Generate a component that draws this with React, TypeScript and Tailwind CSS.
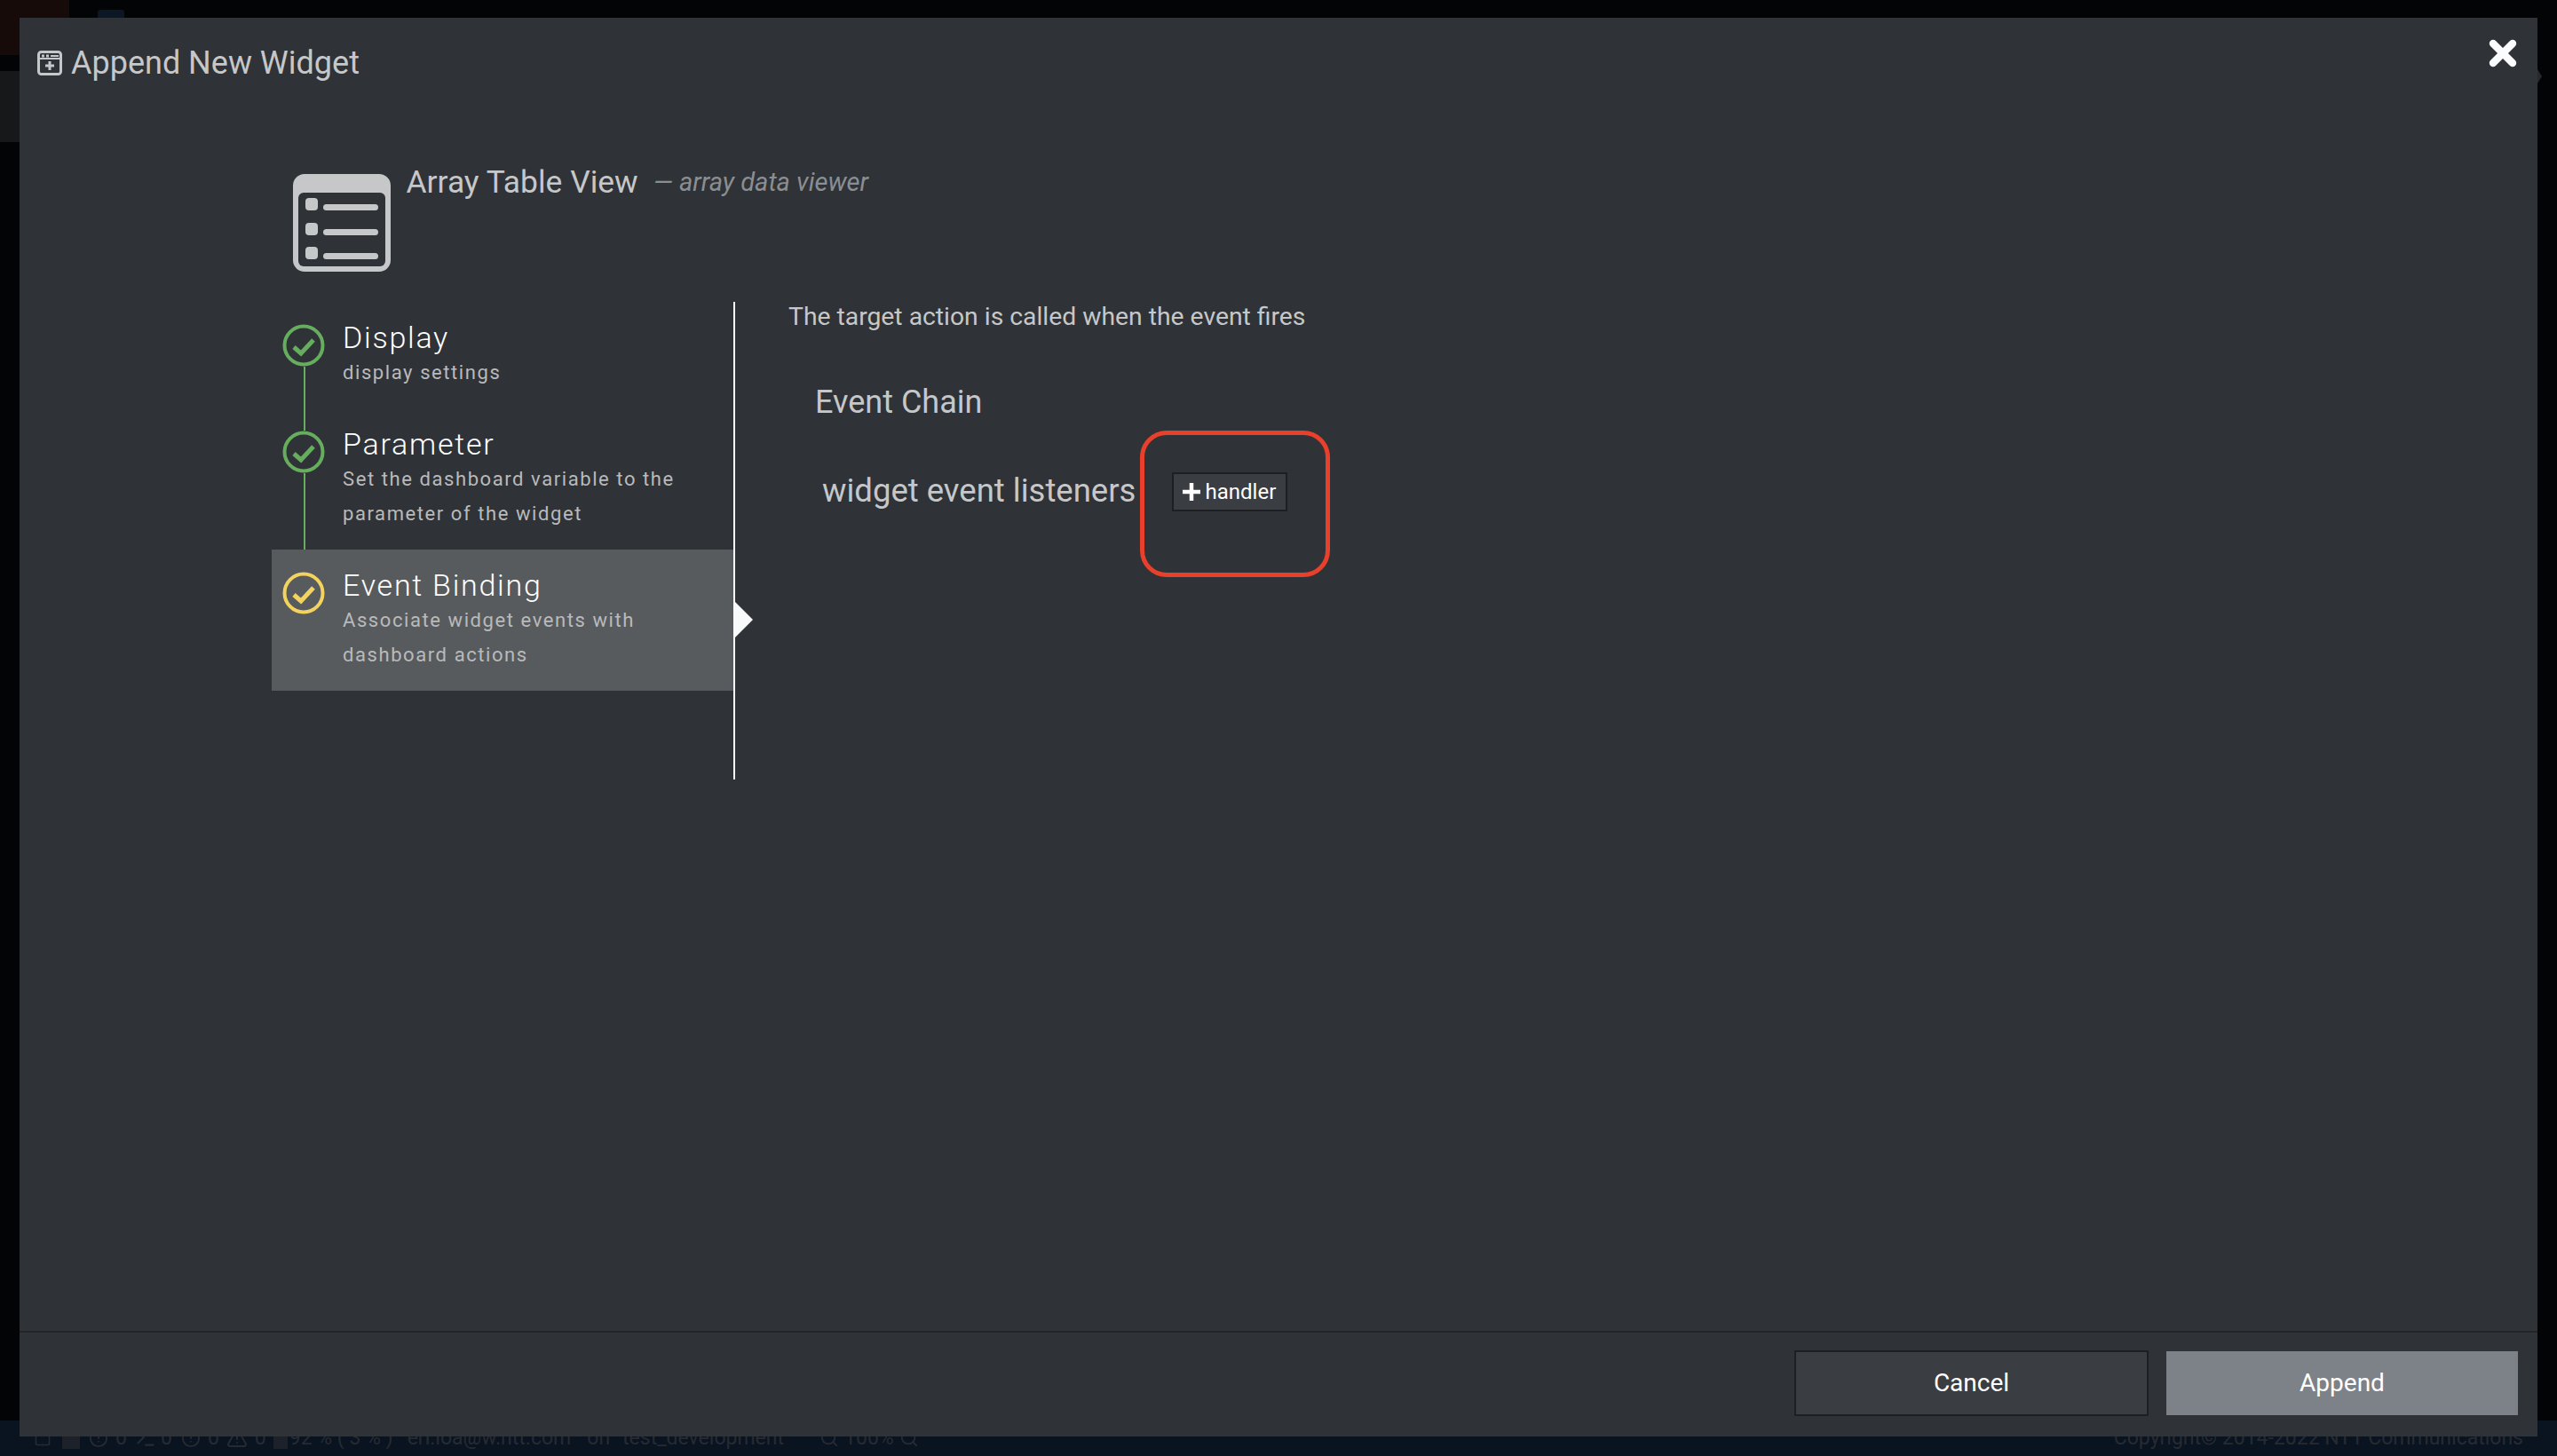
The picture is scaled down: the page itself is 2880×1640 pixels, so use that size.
import { CircleAlert, Search, Square, Terminal, TriangleAlert, X } from "lucide-react";

const steps = [
  { title: "Display", desc: ["display settings"], line: "h-[72px]", color: "#66ad5e" },
  { title: "Parameter", desc: ["Set the dashboard variable to the", "parameter of the widget"], line: "h-[111px]", color: "#66ad5e" },
  { title: "Event Binding", desc: ["Associate widget events with", "dashboard actions"], active: true, color: "#f3d35f" },
];

function StepCheck({ color }: { color: string }) {
  return (
    <svg width="48" height="48" viewBox="0 0 48 48" fill="none" className="relative mt-[5px] shrink-0">
      <circle cx="24" cy="24" r="21.5" stroke={color} strokeWidth="4" />
      <path d="M13 26l8 7 14-15" stroke={color} strokeWidth="5" />
    </svg>
  );
}

function TableIcon() {
  return (
    <svg width="110" height="110" viewBox="0 0 110 110" className="shrink-0 mt-[12px]">
      <rect width="110" height="110" rx="13" fill="#c6c7c8" />
      <rect x="6" y="21" width="98" height="83" rx="6" fill="#2f3237" />
      {[27, 55, 82].map((y) => (
        <g key={y} fill="#c6c7c8">
          <rect x="14" y={y} width="14" height="14" rx="4" />
          <rect x="34" y={y + 7} width="62" height="7" rx="3.5" />
        </g>
      ))}
    </svg>
  );
}

function WidgetIcon() {
  return (
    <svg width="28" height="28" viewBox="0 0 28 28" className="shrink-0">
      <rect x="1.5" y="1.5" width="25" height="25" rx="3" fill="none" stroke="#c6c7c8" strokeWidth="3" />
      <rect x="1.5" y="8" width="25" height="2" fill="#c6c7c8" />
      <rect x="5" y="4.5" width="3" height="3" fill="#c6c7c8" />
      <rect x="10" y="4.5" width="3" height="3" fill="#c6c7c8" />
      <rect x="15" y="5" width="9" height="2" fill="#c6c7c8" />
      <path d="M14 12v10M9 17h10" stroke="#c6c7c8" strokeWidth="3" />
    </svg>
  );
}

export default function App() {
  return (
    <div className="relative flex h-[1640px] w-[2880px] flex-col overflow-hidden bg-[#030405] font-['Roboto',sans-serif]">
      {/* page behind the dialog */}
      <div className="h-[62px] w-[78px] bg-[#170b09]" />
      <div className="mt-[18px] h-[80px] w-[22px] bg-[#17181a]" />
      <div className="absolute left-[110px] top-[11px] h-[9px] w-[30px] rounded-t-[3px] bg-[#0c1726]" />
      <div className="absolute left-[2858px] top-[78px] h-0 w-0 border-y-[8px] border-l-[5px] border-y-transparent border-l-[#26282b]" />
      <div className="mt-auto flex h-[40px] items-center justify-between bg-[#0a1320] pl-[38px] pr-[38px] text-[23px] text-[#262b33]">
        <div className="flex items-center">
          <Square size={20} />
          <span className="ml-[12px] h-[24px] w-[20px] bg-[#1d2129]" />
          <CircleAlert size={22} className="ml-[10px]" />
          <span className="ml-[8px]">0</span>
          <Terminal size={26} className="ml-[8px]" />
          <span className="ml-[4px]">0</span>
          <CircleAlert size={22} className="ml-[10px]" />
          <span className="ml-[8px]">0</span>
          <TriangleAlert size={24} className="ml-[8px]" />
          <span className="ml-[8px]">0</span>
          <span className="ml-[8px] h-[24px] w-[16px] bg-[#1d2129]" />
          <span className="ml-[2px]">92 % ( 3 % )</span>
          <span className="ml-[16px]">eri.ioa@w.ntt.com</span>
          <span className="ml-[18px]">on</span>
          <span className="ml-[14px]">test_development</span>
          <Search size={22} className="ml-[40px]" />
          <span className="ml-[6px]">100%</span>
          <Search size={22} className="ml-[6px]" />
        </div>
        <span>Copyright© 2014-2022 NTT Communications</span>
      </div>

      {/* dialog */}
      <div className="absolute left-[22px] top-[20px] flex h-[1598px] w-[2836px] flex-col bg-[#2f3237] text-[#c6c7c8]">
        <button className="absolute right-[17px] top-[18px] text-[#fbfcfd]">
          <X size={44} strokeWidth={4.6} />
        </button>

        <div className="flex items-center gap-[10px] pl-[20px] pt-[36px] text-[36px] leading-[30px]">
          <WidgetIcon />
          <span>Append New Widget</span>
        </div>

        <div className="flex-1 pl-[284px] pt-[98px]">
          <div className="flex items-start pl-[23.5px]">
            <TableIcon />
            <span className="ml-[18px] text-[35.4px] leading-[42px]">Array Table View</span>
            <span className="ml-[17px] mt-[3px] text-[29px] italic leading-[36px] text-[#8b8e91]">— array data viewer</span>
          </div>

          <div className="mt-[34px] flex">
            <div className="h-[538px] w-[522px] shrink-0 border-r-2 border-white">
              {steps.map((step) => (
                <div
                  key={step.title}
                  className={
                    step.active
                      ? "relative flex gap-[20px] bg-[#585b5e] pb-[21px] pl-[12px] pt-[20px]"
                      : "relative flex gap-[20px] pb-[21px] pl-[12px] pt-[20px]"
                  }
                >
                  {step.line && <div className={`absolute left-[35.5px] top-[73px] w-[2px] bg-[#66ad5e] ${step.line}`} />}
                  <StepCheck color={step.color} />
                  <div>
                    <div className="text-[34px] font-light leading-[40px] tracking-[1.75px] text-white">{step.title}</div>
                    {step.desc.map((line) => (
                      <div key={line} className="text-[22px] leading-[39px] tracking-[1.58px] text-[#b9babb]">
                        {line}
                      </div>
                    ))}
                  </div>
                  {step.active && (
                    <div className="absolute left-full top-[59px] ml-[2px] h-0 w-0 border-y-[20px] border-l-[20px] border-y-transparent border-l-[#f8f9fb]" />
                  )}
                </div>
              ))}
            </div>

            <div className="pl-[60px] pt-0">
              <p className="text-[28.3px] leading-[34px]">The target action is called when the event fires</p>
              <h3 className="ml-[30px] mt-[58px] text-[36px] leading-[42px]">Event Chain</h3>
              <div className="relative ml-[38px] mt-[56px] flex items-center">
                <span className="text-[36.5px] leading-[44px]">widget event listeners</span>
                <button className="ml-[41px] mt-[2px] flex h-[44px] w-[130px] items-center justify-center gap-[5px] border-2 border-[#1e1f22] bg-[#3a3d42] pr-[3px] text-[24px] text-white">
                  <svg width="22" height="22" viewBox="0 0 22 22" className="shrink-0">
                    <path d="M11 1v20M1 11h20" stroke="#fff" strokeWidth="4.5" />
                  </svg>
                  handler
                </button>
                {/* red annotation round the button */}
                <div className="absolute left-[358px] top-[-45px] h-[165px] w-[214px] rounded-[30px] border-[5px] border-[#e8402a]" />
              </div>
            </div>
          </div>
        </div>

        <div className="flex h-[119px] items-center justify-end gap-[20px] border-t-2 border-[#232427] pb-[3px] pr-[22px]">
          <button className="h-[74px] w-[399px] border-2 border-[#1e1f22] bg-[#3a3d42] text-[28px] text-white">Cancel</button>
          <button className="h-[72px] w-[396px] bg-[#7c8288] text-[28px] text-white">Append</button>
        </div>
      </div>
    </div>
  );
}
